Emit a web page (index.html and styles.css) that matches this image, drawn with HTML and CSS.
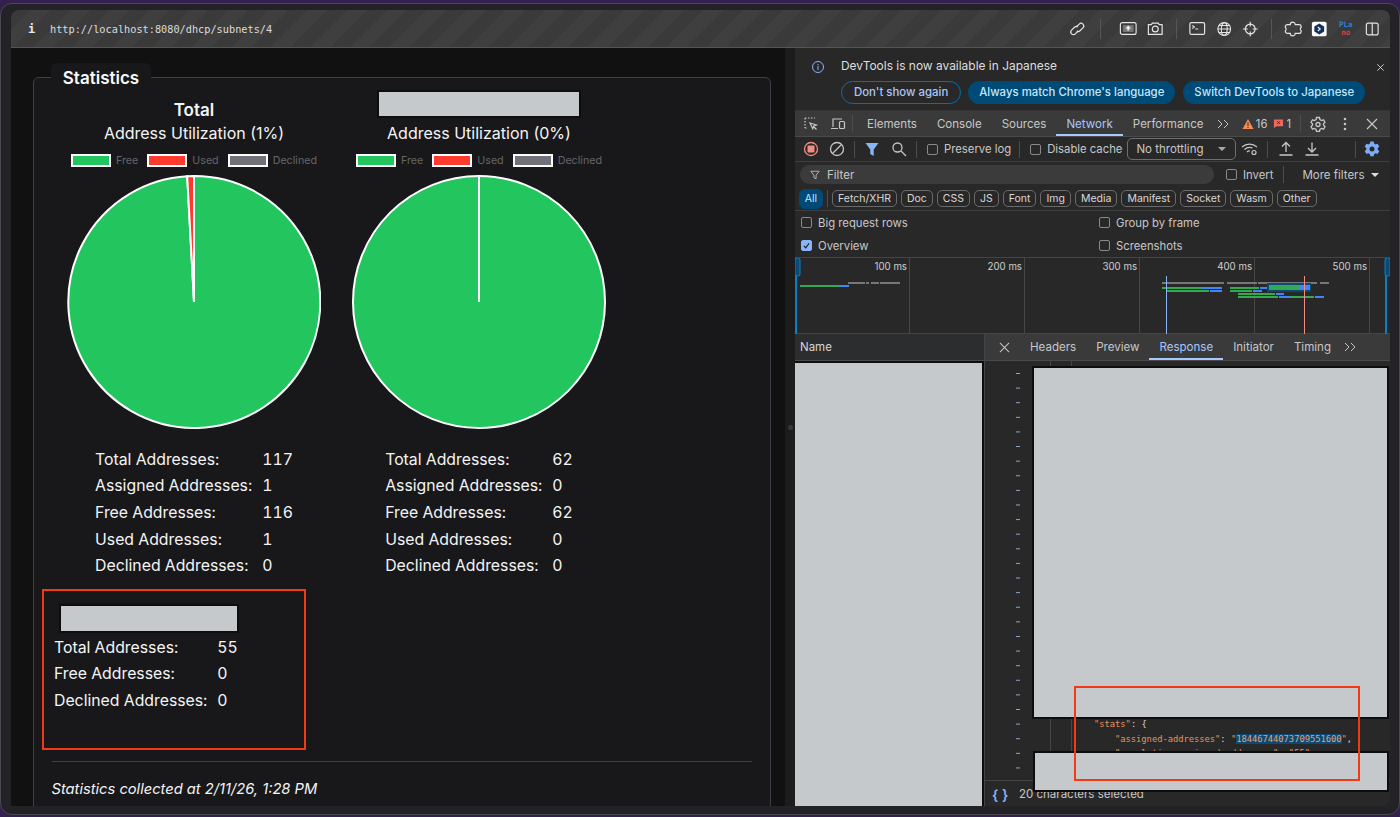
FILE: index.html
```html
<!DOCTYPE html>
<html lang="en">
<head>
    <meta charset="UTF-8">
    <title>Subnet statistics</title>
    <link rel="stylesheet" href="styles.css">
</head>
<body>
<div class="window">
    <div class="browser-bar">
        <span class="info-mark">i</span>
        <span class="url">http://localhost:8080/dhcp/subnets/4</span>
        <div class="bar-icons">
            <svg class="bar-icon" viewBox="0 0 27 20"><g fill="none" stroke="#e4e4e4" stroke-width="1.2"><path d="M12.5 8 L15.5 5 a2.6 2.6 0 0 1 3.8 3.8 L16.3 11.8 a2.6 2.6 0 0 1 -3.3 .3"/><path d="M14.5 12 L11.5 15 a2.6 2.6 0 0 1 -3.8 -3.8 L10.7 8.2 a2.6 2.6 0 0 1 3.3 -.3"/></g></svg>
            <span class="bar-sep bar-sep-wide"></span>
            <svg class="bar-icon" viewBox="0 0 27 20"><rect x="5.5" y="3.5" width="16" height="12" rx="2" fill="#3a3a3a" stroke="#e4e4e4" stroke-width="1.2"/><path d="M8 6h11v7H8z" fill="#777"/><path d="M13.5 6.5l3 3h-2v2h-2v-2h-2z" fill="#eee"/></svg>
            <svg class="bar-icon" viewBox="0 0 27 20"><g fill="none" stroke="#e4e4e4" stroke-width="1.2"><path d="M6.5 5.5h3l1-1.5h6l1 1.5h3v10h-14z"/><circle cx="13.5" cy="10" r="3"/></g></svg>
            <span class="bar-sep"></span>
            <svg class="bar-icon" viewBox="0 0 27 20"><g fill="none" stroke="#e4e4e4" stroke-width="1.2"><rect x="6" y="3.5" width="15" height="12" rx="1.5"/><path d="M8.5 6.5l2 1.5-2 1.5M11.5 10h3"/></g></svg>
            <svg class="bar-icon" viewBox="0 0 27 20"><g fill="none" stroke="#e4e4e4" stroke-width="1.1"><circle cx="13.5" cy="10" r="6.5"/><ellipse cx="13.5" cy="10" rx="3" ry="6.5"/><path d="M7 10h13M8 6.5h11M8 13.5h11"/></g></svg>
            <svg class="bar-icon" viewBox="0 0 27 20"><g fill="none" stroke="#e4e4e4" stroke-width="1.2"><circle cx="13.5" cy="10" r="5"/><path d="M13.5 2.5v5M13.5 12.5v5M6 10h5M16 10h5"/></g></svg>
            <span class="bar-sep"></span>
            <svg class="bar-icon" viewBox="0 0 27 20"><path d="M5.5 7.5a2 2 0 0 1 2-2h3a2.5 2.5 0 0 1 5 0h4a2 2 0 0 1 2 2v1a1.8 1.8 0 0 0 0 3v1a2 2 0 0 1-2 2h-4a2.5 2.5 0 0 1-5 0h-3a2 2 0 0 1-2-2v-1a1.8 1.8 0 0 0 0-3z" fill="none" stroke="#e4e4e4" stroke-width="1.2"/></svg>
            <svg class="bar-icon" viewBox="0 0 27 20"><rect x="6" y="2.5" width="15" height="15" rx="2" fill="#fff"/><path d="M13.5 4.5l5 3v5l-5 3-5-3v-5z" fill="#12315c"/><path d="M12 8l2.500 2-2.500 2" fill="none" stroke="#fff" stroke-width="1.1"/></svg>
            <span class="bar-icon ext-text"><span class="ext-blue">PLa</span><span class="ext-red">no</span></span>
            <svg class="bar-icon" viewBox="0 0 27 20"><rect x="7.5" y="4" width="12" height="12" rx="2" fill="none" stroke="#e4e4e4" stroke-width="1.2"/><path d="M13.500 4v12" stroke="#e4e4e4" stroke-width="1.2"/></svg>
        </div>
    </div>

    <div class="main">
        <div class="page">
            <div class="panel">
                <div class="panel-legend">Statistics</div>

                <div class="chart-row">
                    <div class="chart-col">
                        <div class="chart-title">Total</div>
                        <div class="chart-sub">Address Utilization (1%)</div>
                        <div class="legend">
                            <span class="swatch swatch-free"></span><span class="legend-text">Free</span>
                            <span class="swatch swatch-used"></span><span class="legend-text">Used</span>
                            <span class="swatch swatch-declined"></span><span class="legend-text">Declined</span>
                        </div>
                        <svg class="pie" viewBox="0 0 254 254">
                            <path d="M127 127L127 1A126 126 0 1 1 120.2 1.2Z" fill="#22c55e" stroke="#fff" stroke-width="2"/>
                            <path d="M127 127L120.2 1.2A126 126 0 0 1 127 1Z" fill="#ff3b30" stroke="#fff" stroke-width="2"/>
                        </svg>
                        <table class="stats">
                            <tr><td>Total Addresses:</td><td>117</td></tr>
                            <tr><td>Assigned Addresses:</td><td>1</td></tr>
                            <tr><td>Free Addresses:</td><td>116</td></tr>
                            <tr><td>Used Addresses:</td><td>1</td></tr>
                            <tr><td>Declined Addresses:</td><td>0</td></tr>
                        </table>
                    </div>
                    <div class="chart-col">
                        <div class="redact chart-redact"></div>
                        <div class="chart-sub">Address Utilization (0%)</div>
                        <div class="legend">
                            <span class="swatch swatch-free"></span><span class="legend-text">Free</span>
                            <span class="swatch swatch-used"></span><span class="legend-text">Used</span>
                            <span class="swatch swatch-declined"></span><span class="legend-text">Declined</span>
                        </div>
                        <svg class="pie" viewBox="0 0 254 254">
                            <circle cx="127" cy="127" r="126" fill="#22c55e" stroke="#fff" stroke-width="2"/>
                            <path d="M127 127V1" stroke="#fff" stroke-width="2"/>
                        </svg>
                        <table class="stats">
                            <tr><td>Total Addresses:</td><td>62</td></tr>
                            <tr><td>Assigned Addresses:</td><td>0</td></tr>
                            <tr><td>Free Addresses:</td><td>62</td></tr>
                            <tr><td>Used Addresses:</td><td>0</td></tr>
                            <tr><td>Declined Addresses:</td><td>0</td></tr>
                        </table>
                    </div>
                </div>

                <div class="pool-block">
                    <div class="redact pool-redact"></div>
                    <table class="stats stats-pool">
                        <tr><td>Total Addresses:</td><td>55</td></tr>
                        <tr><td>Free Addresses:</td><td>0</td></tr>
                        <tr><td>Declined Addresses:</td><td>0</td></tr>
                    </table>
                </div>

                <div class="panel-foot">Statistics collected at 2/11/26, 1:28 PM</div>
            </div>
            <div class="note-box note-left"></div>
        </div>

        <div class="splitter"><span class="splitter-dot"></span></div>

        <div class="devtools">
            <div class="infobar">
                <svg class="info-icon" viewBox="0 0 14 14"><g fill="none" stroke="#8ab4f8" stroke-width="1"><circle cx="7" cy="7" r="5.5"/><path d="M7 6v4M7 4v1.200"/></g></svg>
                <div class="info-body">
                    <div class="info-text">DevTools is now available in Japanese</div>
                    <div class="info-actions">
                        <span class="pill pill-outline">Don't show again</span>
                        <span class="pill">Always match Chrome's language</span>
                        <span class="pill">Switch DevTools to Japanese</span>
                    </div>
                </div>
                <svg class="info-close" viewBox="0 0 10 10"><path d="M1.5 1.5l7 7M8.5 1.5l-7 7" stroke="#ccc" stroke-width="1.1"/></svg>
            </div>

            <div class="tabs">
                <svg class="tool-icon" viewBox="0 0 16 16"><g fill="none" stroke="#c4c7c5" stroke-width="1.2"><path d="M2 2h10M2 2v10M2 12h3" stroke-dasharray="1.5 1.5"/><path d="M7 7l6.500 2-2.700 1-1 2.800zM11 11l2.500 2.500"/></g></svg>
                <svg class="tool-icon" viewBox="0 0 16 16"><g fill="none" stroke="#c4c7c5" stroke-width="1.2"><path d="M3 11V3h9M1 12.500h7"/><rect x="9.5" y="5.5" width="5" height="7" rx="1"/></g></svg>
                <span class="tool-sep"></span>
                <span class="tab tab-first">Elements</span>
                <span class="tab">Console</span>
                <span class="tab">Sources</span>
                <span class="tab tab-active">Network</span>
                <span class="tab">Performance</span>
                <svg class="tab-more" viewBox="0 0 12 10"><path d="M1 1l4 4-4 4M7 1l4 4-4 4" fill="none" stroke="#c4c7c5"/></svg>
                <svg class="warn-icon" viewBox="0 0 12 12"><path d="M6 1l5.500 10H.5z" fill="#f28b54"/><path d="M6 4.500v3.500M6 9v1" stroke="#282828"/></svg>
                <span class="count">16</span>
                <svg class="err-icon" viewBox="0 0 12 12"><path d="M1 1.500h10v7.500H4l-3 2z" fill="#f2695c"/><path d="M4.500 3.500l3 3M7.500 3.500l-3 3" stroke="#5a1a14"/></svg>
                <span class="count">1</span>
                <span class="tool-sep tool-sep-right"></span>
                <svg class="tool-icon gear" viewBox="0 0 16 16"><g fill="none" stroke="#c4c7c5" stroke-width="1.3"><path d="M6.500 1.500h3l.4 2 1.700 1 1.900-.7 1.500 2.600-1.500 1.300v1.600l1.500 1.300-1.500 2.600-1.900-.7-1.700 1-.4 2h-3l-.4-2-1.700-1-1.900.7L1 10.600l1.500-1.300V7.700L1 6.400l1.500-2.600 1.900.7 1.700-1z"/><circle cx="8" cy="8.500" r="2"/></g></svg>
                <svg class="tool-icon kebab" viewBox="0 0 16 16"><g fill="#c4c7c5"><circle cx="8" cy="3" r="1.300"/><circle cx="8" cy="8" r="1.300"/><circle cx="8" cy="13" r="1.300"/></g></svg>
                <svg class="tool-icon close-x" viewBox="0 0 16 16"><path d="M3 3l10 10M13 3L3 13" stroke="#c4c7c5" stroke-width="1.2"/></svg>
            </div>

            <div class="toolbar">
                <svg class="tool-icon" viewBox="0 0 16 16"><circle cx="8" cy="8" r="6.5" fill="none" stroke="#f28b82" stroke-width="1.3"/><rect x="4.5" y="4.5" width="7" height="7" rx="1" fill="#f28b82"/></svg>
                <svg class="tool-icon clear-icon" viewBox="0 0 16 16"><g fill="none" stroke="#c4c7c5" stroke-width="1.3"><circle cx="8" cy="8" r="6.5"/><path d="M3.500 12.500l9-9"/></g></svg>
                <span class="tool-sep sep-a"></span>
                <svg class="tool-icon filter-icon" viewBox="0 0 16 16"><path d="M1.500 2h13L9.700 8.500V15L6.300 13V8.500z" fill="#8ab4f8"/></svg>
                <svg class="tool-icon search-icon" viewBox="0 0 16 16"><g fill="none" stroke="#c4c7c5" stroke-width="1.3"><circle cx="6.5" cy="6.5" r="4.5"/><path d="M10 10l5 5"/></g></svg>
                <span class="tool-sep sep-b"></span>
                <label class="check check-preserve"><span class="box"></span>Preserve log</label>
                <span class="tool-sep sep-c"></span>
                <label class="check check-cache"><span class="box"></span>Disable cache</label>
                <span class="throttle">No throttling<span class="caret"></span></span>
                <svg class="tool-icon wifi-icon" viewBox="0 0 18 16"><g fill="none" stroke="#c4c7c5" stroke-width="1.2"><path d="M1 6a11 11 0 0 1 15 0M3.500 8.500a7.500 7.500 0 0 1 8-1.500M6 11a3.500 3.500 0 0 1 3-1"/><circle cx="13" cy="11.5" r="2"/></g></svg>
                <span class="tool-sep sep-d"></span>
                <svg class="tool-icon up-icon" viewBox="0 0 16 16"><g fill="none" stroke="#c4c7c5" stroke-width="1.3"><path d="M8 11V2M4 5.500L8 1.500l4 4M1.500 14h13"/></g></svg>
                <svg class="tool-icon down-icon" viewBox="0 0 16 16"><g fill="none" stroke="#c4c7c5" stroke-width="1.3"><path d="M8 1.500V10M4 7l4 4 4-4M1.500 14h13"/></g></svg>
                <span class="tool-sep sep-e"></span>
                <svg class="tool-icon blue-gear" viewBox="0 0 16 16"><path d="M6.300 .5h3.400l.4 2.100 1.500.9 2-.8 1.700 3-1.600 1.300v1.800l1.600 1.300-1.700 3-2-.8-1.500.9-.4 2.100H6.300l-.4-2.100-1.500-.9-2 .8-1.700-3 1.600-1.300V7L.7 5.700l1.700-3 2 .8 1.500-.9zM8 5.500a2.500 2.500 0 1 0 0 5 2.500 2.500 0 0 0 0-5z" fill="#7cacf8" fill-rule="evenodd"/></svg>
            </div>

            <div class="filter-row">
                <div class="filter-input">
                    <svg class="filter-small" viewBox="0 0 12 12"><path d="M1 1.500h10L7.300 6.200V10.500L4.700 9.300V6.200z" fill="none" stroke="#c4c7c5"/></svg>
                    Filter
                </div>
                <label class="check check-invert"><span class="box"></span>Invert</label>
                <span class="tool-sep sep-f"></span>
                <span class="more-filters">More filters<span class="caret caret-light"></span></span>
            </div>

            <div class="chips">
                <span class="chip chip-on">All</span>
                <span class="tool-sep sep-g"></span>
                <span class="chip">Fetch/XHR</span>
                <span class="chip">Doc</span>
                <span class="chip">CSS</span>
                <span class="chip">JS</span>
                <span class="chip">Font</span>
                <span class="chip">Img</span>
                <span class="chip">Media</span>
                <span class="chip">Manifest</span>
                <span class="chip">Socket</span>
                <span class="chip">Wasm</span>
                <span class="chip">Other</span>
            </div>

            <div class="settings">
                <label class="check"><span class="box"></span>Big request rows</label>
                <label class="check"><span class="box"></span>Group by frame</label>
                <label class="check"><span class="box box-on"><svg viewBox="0 0 12 12"><path d="M2.500 6.500l2.500 2.500 4.500-6" fill="none" stroke="#222" stroke-width="1.6"/></svg></span>Overview</label>
                <label class="check"><span class="box"></span>Screenshots</label>
            </div>

            <div class="overview">
                <div class="ov-cell">100 ms</div>
                <div class="ov-cell">200 ms</div>
                <div class="ov-cell">300 ms</div>
                <div class="ov-cell">400 ms</div>
                <div class="ov-cell">500 ms</div>
                <svg class="ov-bars" viewBox="0 0 595 76">
                    <g fill="#777">
                        <rect x="53" y="24" width="17" height="2"/><rect x="71" y="24" width="3" height="2"/><rect x="76" y="24" width="8" height="2"/><rect x="85" y="24" width="20" height="2"/>
                        <rect x="367" y="24" width="62" height="2"/><rect x="432" y="24" width="30" height="2"/><rect x="463" y="24" width="59" height="2"/><rect x="525" y="24" width="9" height="2"/>
                    </g>
                    <g fill="#34a853">
                        <rect x="5" y="27" width="39" height="2"/>
                        <rect x="367" y="29" width="40" height="2"/><rect x="372" y="32" width="42" height="2"/>
                        <rect x="435" y="29" width="29" height="2"/><rect x="435" y="32" width="22" height="2"/>
                        <rect x="443" y="35" width="37" height="2"/><rect x="443" y="38" width="40" height="2"/><rect x="494" y="38" width="25" height="2"/>
                    </g>
                    <g fill="#4285f4">
                        <rect x="44" y="27" width="10" height="2"/>
                        <rect x="407" y="29" width="20" height="2"/><rect x="415" y="32" width="12" height="2"/>
                        <rect x="465" y="29" width="7" height="2"/><rect x="458" y="32" width="9" height="2"/>
                        <rect x="481" y="35" width="8" height="2"/><rect x="484" y="38" width="10" height="2"/><rect x="520" y="38" width="9" height="2"/>
                    </g>
                    <rect x="472.5" y="25.5" width="43" height="8" fill="#0a4a75" stroke="#0a4a75"/>
                    <rect x="474" y="27" width="31" height="5" fill="#34a853"/>
                    <rect x="505" y="27" width="10" height="5" fill="#4285f4"/>
                    <path d="M371.500 18V76" stroke="#8ab4f8"/>
                    <path d="M509.500 18V76" stroke="#f28b82"/>
                    <path d="M1 0V76M591 0V76" stroke="#0a7fc4" stroke-width="2"/>
                    <rect x="0" y="0" width="5" height="18" rx="2" fill="#0a4a75" stroke="#0a7fc4"/>
                    <rect x="590" y="0" width="5" height="18" rx="2" fill="#0a4a75" stroke="#0a7fc4"/>
                </svg>
            </div>

            <div class="split">
                <div class="net-list">
                    <div class="name-head">Name</div>
                    <div class="redact name-redact"></div>
                </div>
                <div class="detail">
                    <div class="detail-tabs">
                        <svg class="detail-close" viewBox="0 0 12 12"><path d="M1 1l10 10M11 1L1 11" stroke="#c4c7c5" stroke-width="1.1"/></svg>
                        <span class="tab">Headers</span>
                        <span class="tab">Preview</span>
                        <span class="tab tab-active">Response</span>
                        <span class="tab">Initiator</span>
                        <span class="tab">Timing</span>
                        <svg class="tab-more" viewBox="0 0 12 10"><path d="M1 1l4 4-4 4M7 1l4 4-4 4" fill="none" stroke="#c4c7c5"/></svg>
                    </div>
                    <div class="code-area">
                        <div class="gutter"></div>
                        <div class="code">
                            <div class="code-line"><span class="key">"stats"</span>: {</div>
                            <div class="code-line code-in"><span class="key">"assigned-addresses"</span>: <span class="key">"<span class="picked">18446744073709551600</span>"</span>,</div>
                            <div class="code-line code-in"><span class="key">"cumulative-assigned-addresses"</span>: <span class="key">"55"</span></div>
                        </div>
                        <div class="redact code-redact-top"></div>
                        <div class="redact code-redact-bottom"></div>
                    </div>
                    <div class="status"><span class="braces">{ }</span>20 characters selected</div>
                </div>
            </div>
            <div class="note-box note-right"></div>
        </div>
    </div>
</div>
</body>
</html>
```

FILE: styles.css
```css
* { margin: 0; padding: 0; box-sizing: border-box; }

body {
    width: 1400px;
    height: 817px;
    overflow: hidden;
    background: #33204f;
    font-family: 'Inter', 'Liberation Sans', sans-serif;
    padding-top: 3px;
}

.window {
    height: 812px;
    background: #232226;
    border: 1px solid #4b494d;
    border-radius: 12px;
    padding: 6px 9px 8px 10px;
    display: flex;
    flex-direction: column;
}

/* browser bar */
.browser-bar {
    height: 38px;
    flex: none;
    display: flex;
    align-items: center;
    border-bottom: 1px solid #555;
    border-radius: 8px 8px 0 0;
    background: repeating-linear-gradient(135deg, #3a3a3a 0, #3a3a3a 14px, #3f3f3f 14px, #3f3f3f 28px);
}

.info-mark {
    font-family: 'DejaVu Sans Mono', monospace;
    font-weight: 700;
    font-size: 12px;
    color: #e8e8e8;
    margin-left: 17px;
    width: 22px;
}

.url {
    font-family: 'DejaVu Sans Mono', monospace;
    font-size: 10.25px;
    color: #dcdcdc;
}

.bar-icons {
    margin-left: auto;
    padding-right: 4.5px;
    display: flex;
    align-items: center;
}

.bar-icon {
    width: 26.5px;
    height: 20px;
    flex: none;
}

.bar-sep {
    width: 1px;
    height: 20px;
    background: #565656;
    margin: 0 7.5px;
}

.bar-sep-wide { margin-right: 14px; margin-left: 10px; }

.ext-text {
    font-family: 'DejaVu Sans Mono', monospace;
    font-size: 7.5px;
    font-weight: 700;
    line-height: 7.5px;
    text-align: center;
    display: flex;
    flex-direction: column;
    justify-content: center;
}

.ext-blue { color: #2f7fd6; }
.ext-red { color: #d8404a; }

.main {
    flex: 1;
    display: flex;
    min-height: 0;
}

/* left page */
.page {
    width: 774px;
    flex: none;
    background: #111112;
    padding: 29px 14px 0 22px;
    position: relative;
    overflow: hidden;
    color: #f4f4f5;
}

.panel {
    height: 760px;
    background: #18181b;
    border: 1px solid #3f3f46;
    border-radius: 6px;
    padding: 0 18px 0 17.5px;
    position: relative;
}

.panel-legend {
    position: absolute;
    left: 17px;
    top: -15px;
    width: 100px;
    height: 30px;
    background: #18181b;
    border-radius: 6px 6px 0 0;
    font-size: 17px;
    font-weight: 600;
    line-height: 30px;
    text-align: center;
    color: #fafafa;
}

.chart-row {
    display: flex;
    padding-top: 21px;
}

.chart-col {
    width: 285px;
    display: flex;
    flex-direction: column;
    align-items: center;
}

.chart-title {
    font-size: 17px;
    font-weight: 600;
    line-height: 22px;
    height: 22px;
}

.chart-redact {
    width: 204px;
    height: 28px;
    margin-top: -9px;
    margin-bottom: 3px;
}

.chart-sub {
    font-size: 16px;
    line-height: 24px;
}

.legend {
    display: flex;
    align-items: center;
    margin-top: 8px;
    height: 14px;
}

.swatch {
    width: 40px;
    height: 13px;
    border: 2px solid #fff;
    margin-right: 5px;
}

.swatch-free { background: #22c55e; }
.swatch-used { background: #ff3b30; }
.swatch-declined { background: #71717a; }

.legend-text {
    font-size: 10.7px;
    color: #666;
    margin-right: 9px;
}

.legend-text:last-child { margin-right: 0; }

.pie {
    width: 254px;
    height: 254px;
    margin-top: 8px;
}

.stats {
    border-collapse: collapse;
    margin-top: 17px;
    font-size: 15.8px;
    font-variant-numeric: tabular-nums;
}

.stats td {
    height: 26.6px;
    padding: 0 10px 0 0;
    white-space: nowrap;
}

.stats td:last-child { padding-right: 0; }

.pool-block {
    margin-top: 25px;
    margin-left: 2.5px;
    height: 145px;
}

.pool-redact {
    width: 180px;
    height: 29px;
    margin-left: 5px;
    margin-bottom: 1px;
}

.stats-pool { margin-top: 0; }

.panel-foot {
    border-top: 1px solid #3f3f46;
    padding-top: 18px;
    margin-top: 12px;
    font-size: 14.7px;
    font-style: italic;
}

.redact {
    background: #c5c9cc;
    border: 2px solid #0d0d0e;
}

.note-box {
    position: absolute;
    border: 2px solid #f23a17;
    z-index: 5;
}

.note-left {
    left: 31px;
    top: 541px;
    width: 264px;
    height: 161px;
}

.note-right {
    left: 279px;
    top: 638px;
    width: 286px;
    height: 95px;
}

.splitter {
    width: 10px;
    flex: none;
    background: #1c1c1d;
    display: flex;
    align-items: center;
    justify-content: center;
}

.splitter-dot {
    width: 5px;
    height: 5px;
    border-radius: 50%;
    background: #383838;
}

/* devtools */
.devtools {
    flex: 1;
    min-width: 0;
    background: #282828;
    color: #c7c7c7;
    font-size: 11.5px;
    display: flex;
    flex-direction: column;
    position: relative;
    overflow: hidden;
    border-radius: 0 0 8px 0;
}

.infobar {
    height: 62px;
    flex: none;
    display: flex;
    position: relative;
    padding-left: 16px;
}

.info-icon {
    width: 14px;
    height: 14px;
    margin-top: 12px;
    flex: none;
}

.info-body { margin-left: 16px; }

.info-text {
    font-size: 11.95px;
    line-height: 16px;
    margin-top: 10px;
    color: #dedede;
}

.info-actions {
    display: flex;
    gap: 8px;
    margin-top: 7px;
}

.pill {
    height: 23px;
    padding: 0 11px;
    border-radius: 12px;
    background: #004a77;
    color: #c2e7ff;
    font-size: 11.4px;
    font-weight: 500;
    line-height: 23px;
    white-space: nowrap;
}

.pill-outline {
    background: transparent;
    border: 1px solid #0a6ea8;
    line-height: 21px;
    color: #a8c7fa;
    padding: 0 12px;
    margin-right: -1px;
}

.info-close {
    position: absolute;
    right: 5px;
    top: 15px;
    width: 9px;
    height: 9px;
}

.tabs {
    height: 27px;
    flex: none;
    background: #3a3a3a;
    border-top: 1px solid #333;
    border-bottom: 1px solid #4a4a4a;
    display: flex;
    align-items: center;
    padding: 0 10px 0 8px;
}

.tool-icon {
    width: 16px;
    height: 16px;
    flex: none;
}

.tabs .tool-icon + .tool-icon { margin-left: 11px; }

.tool-sep {
    width: 1px;
    height: 17px;
    background: #4c4c4c;
    flex: none;
    margin-left: 6px;
}

.tab {
    height: 100%;
    padding: 2px 10px 0;
    display: flex;
    align-items: center;
    white-space: nowrap;
    color: #c7c7c7;
    font-size: 11.55px;
    border-bottom: 2px solid transparent;
}

.tab-first { margin-left: 4px; }

.tab-active {
    color: #a8c7fa;
    border-bottom-color: #a8c7fa;
}

.tab-more {
    width: 12px;
    height: 10px;
    margin-left: 3.5px;
    flex: none;
}

.warn-icon {
    width: 12px;
    height: 12px;
    margin-left: auto;
    flex: none;
}

.err-icon {
    width: 11px;
    height: 11px;
    margin-left: 6px;
    flex: none;
}

.count {
    font-size: 11.3px;
    margin-left: 2px;
}

.tool-sep-right { margin-left: 9px; }

.tabs .gear { margin-left: 9px; }
.tabs .kebab { margin-left: 11px; }
.tabs .close-x { margin-left: 10px; }

.toolbar {
    height: 25px;
    flex: none;
    border-bottom: 1px solid #3e3e3e;
    display: flex;
    align-items: center;
    padding-left: 8px;
}

.clear-icon { margin-left: 10px; }
.sep-a { margin-left: 9px; }
.filter-icon { margin-left: 9px; }
.search-icon { margin-left: 11px; }
.sep-b { margin-left: 9px; }
.sep-c { margin-left: 8px; }
.wifi-icon { margin-left: 5px; width: 18px; }
.sep-d { margin-left: 8px; }
.up-icon { margin-left: 10px; }
.down-icon { margin-left: 10px; }
.sep-e { margin-left: 35px; }
.blue-gear { margin-left: 8px; }

.check {
    display: flex;
    align-items: center;
    white-space: nowrap;
    color: #c7c7c7;
    font-size: 11.3px;
}

.box {
    width: 11px;
    height: 11px;
    border: 1px solid #8a8a8a;
    border-radius: 2px;
    margin-right: 6px;
    flex: none;
}

.box-on {
    background: #8ab4f8;
    border-color: #8ab4f8;
}

.box-on svg {
    display: block;
    width: 9px;
    height: 9px;
}

.check-preserve { margin-left: 10px; }
.check-cache { margin-left: 10px; }

.throttle {
    width: 109px;
    height: 22px;
    margin-left: 5px;
    border: 1px solid #6f6f6f;
    border-radius: 5px;
    display: flex;
    align-items: center;
    padding-left: 8px;
    position: relative;
    flex: none;
}

.caret {
    position: absolute;
    right: 9px;
    top: 8px;
    border-left: 4px solid transparent;
    border-right: 4px solid transparent;
    border-top: 4px solid #aaa;
}

.filter-row {
    height: 25px;
    flex: none;
    display: flex;
    align-items: center;
    padding-left: 5px;
}

.filter-input {
    width: 414px;
    height: 19px;
    border-radius: 10px;
    background: #3b3b3b;
    display: flex;
    align-items: center;
    padding-left: 10px;
    flex: none;
}

.filter-small {
    width: 10px;
    height: 10px;
    margin-right: 7px;
}

.check-invert { margin-left: 12px; }
.sep-f { margin-left: 10px; }

.more-filters {
    margin-left: 18px;
    position: relative;
    padding-right: 16px;
}

.caret-light {
    right: 2px;
    top: 5px;
    border-top-color: #ddd;
}

.chips {
    height: 24px;
    flex: none;
    border-bottom: 1px solid #3e3e3e;
    display: flex;
    align-items: center;
    gap: 4px;
    padding-left: 4px;
}

.chip {
    height: 17px;
    padding: 0 5px;
    border: 1px solid #6a6a6a;
    border-radius: 5px;
    font-size: 10.5px;
    line-height: 15px;
    color: #d8d8d8;
}

.chip-on {
    background: #004a77;
    border-color: #004a77;
    height: 20px;
    line-height: 18px;
    border-radius: 6px;
    color: #c2e7ff;
    width: 24px;
    padding: 0;
    text-align: center;
}

.sep-g { margin-left: 0; }

.settings {
    height: 47px;
    flex: none;
    display: grid;
    grid-template-columns: 298px 1fr;
    grid-template-rows: 23px 23px;
    align-items: center;
    padding-left: 6px;
    border-bottom: 1px solid #444;
}

.overview {
    height: 76px;
    flex: none;
    display: grid;
    grid-template-columns: 115px 115px 115px 115px 115px 1fr;
    position: relative;
    border-bottom: 1px solid #444;
}

.ov-cell {
    border-right: 1px solid #474747;
    text-align: right;
    padding: 3px 2px 0 0;
    font-size: 9.7px;
    color: #d0d0d0;
}

.ov-bars {
    position: absolute;
    left: 0;
    top: 0;
    width: 595px;
    height: 76px;
}

.split {
    flex: 1;
    min-height: 0;
    display: flex;
}

.net-list {
    width: 190px;
    flex: none;
    border-right: 1px solid #444;
    display: flex;
    flex-direction: column;
}

.name-head {
    height: 27px;
    flex: none;
    background: #2b2d2f;
    border-bottom: 1px solid #4a4a4a;
    padding: 6px 0 0 5px;
    color: #d6d6d6;
}

.name-redact {
    flex: 1;
    border-width: 2px 2px 0 0;
}

.detail {
    flex: 1;
    min-width: 0;
    display: flex;
    flex-direction: column;
}

.detail-tabs {
    height: 27px;
    flex: none;
    background: #3a3a3a;
    border-bottom: 1px solid #4a4a4a;
    display: flex;
    align-items: center;
    padding-left: 14px;
}

.detail-close {
    width: 11px;
    height: 11px;
    margin-right: 10px;
    flex: none;
}

.code-area {
    flex: 1;
    min-height: 0;
    position: relative;
    display: flex;
}

.gutter {
    width: 4px;
    margin-left: 31px;
    background-image: linear-gradient(to bottom, #8ea6d4 1px, transparent 1px);
    background-size: 100% 14.62px;
    background-position: 0 12px;
    flex: none;
}

.code {
    flex: 1;
    font-family: 'DejaVu Sans Mono', monospace;
    font-size: 8.75px;
    color: #d8d8d8;
    padding: 356px 0 0 74px;
    overflow: hidden;
    background:
        linear-gradient(#474747, #474747) 30px 0 / 1px 100% no-repeat,
        linear-gradient(#474747, #474747) 51px 0 / 1px 100% no-repeat;
}

.code-line {
    height: 14.7px;
    line-height: 14.7px;
    white-space: pre;
}

.code-in { padding-left: 21px; }

.key { color: #e8915b; }

.picked {
    background: #0a4a75;
    color: #e8a070;
}

.code-redact-top {
    position: absolute;
    left: 47px;
    top: 5px;
    width: 357px;
    height: 353px;
}

.code-redact-bottom {
    position: absolute;
    left: 48px;
    top: 390px;
    width: 356px;
    height: 41px;
    z-index: 3;
}

.status {
    height: 26px;
    flex: none;
    border-top: 1px solid #444;
    display: flex;
    align-items: center;
    padding: 1px 0 0 7px;
}

.braces {
    color: #8ab4f8;
    font-size: 14px;
    font-weight: 600;
    width: 27px;
    white-space: pre;
}
```
